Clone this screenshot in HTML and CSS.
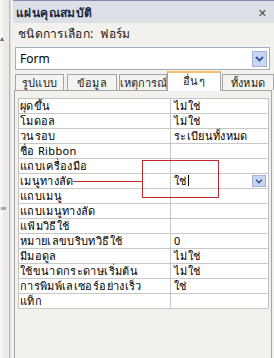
FILE: index.html
```html
<!DOCTYPE html>
<html lang="th">
<head>
  <meta charset="UTF-8" />
  <title>แผ่นคุณสมบัติ</title>
  <link rel="stylesheet" href="styles.css">
</head>
<body>
  <div class="strip">
    <span class="strip-up">&#9652;</span>
    <span class="strip-grip">&#8801;</span>
  </div>
  <div class="pane">
    <div class="titlebar">
      <span class="title">แผ่นคุณสมบัติ</span>
      <span class="close">&#10005;</span>
    </div>
    <div class="sel-label">ชนิดการเลือก:&nbsp; ฟอร์ม</div>
    <div class="combo">
      <span>Form</span>
      <span class="dd"><svg width="9" height="6" viewBox="0 0 9 6"><path d="M1 1 L4.5 4.5 L8 1" fill="none" stroke="#2f4f95" stroke-width="1.8"/></svg></span>
    </div>
    <div class="tabs">
      <div class="tab t1">รูปแบบ</div>
      <div class="tab t2">ข้อมูล</div>
      <div class="tab t3">เหตุการณ์</div>
      <div class="tab t4 active">อื่นๆ</div>
      <div class="tab t5">ทั้งหมด</div>
    </div>
    <div class="panel">
      <div class="grid">
        <div class="row"><div class="k">ผุดขึ้น</div><div class="v">ไม่ใช่</div></div>
        <div class="row"><div class="k">โมดอล</div><div class="v">ไม่ใช่</div></div>
        <div class="row"><div class="k">วนรอบ</div><div class="v">ระเบียนทั้งหมด</div></div>
        <div class="row"><div class="k">ชื่อ Ribbon</div><div class="v"></div></div>
        <div class="row"><div class="k">แถบเครื่องมือ</div><div class="v"></div></div>
        <div class="row"><div class="k">เมนูทางลัด</div><div class="v edit"><span>ใช่<i class="caret"></i></span><span class="dd small"><svg width="8" height="5" viewBox="0 0 9 6"><path d="M1 1 L4.5 4.5 L8 1" fill="none" stroke="#2f4f95" stroke-width="1.8"/></svg></span></div></div>
        <div class="row"><div class="k">แถบเมนู</div><div class="v"></div></div>
        <div class="row"><div class="k">แถบเมนูทางลัด</div><div class="v"></div></div>
        <div class="row"><div class="k">แฟ้มวิธีใช้</div><div class="v"></div></div>
        <div class="row"><div class="k">หมายเลขบริบทวิธีใช้</div><div class="v">0</div></div>
        <div class="row"><div class="k">มีมอดูล</div><div class="v">ไม่ใช่</div></div>
        <div class="row"><div class="k">ใช้ขนาดกระดาษเริ่มต้น</div><div class="v">ไม่ใช่</div></div>
        <div class="row"><div class="k">การพิมพ์เลเซอร์อย่างเร็ว</div><div class="v">ใช่</div></div>
        <div class="row"><div class="k">แท็ก</div><div class="v"></div></div>
      </div>
    </div>
  </div>
  <!-- annotation drawn over the screenshot -->
  <div class="mark-line"></div>
  <div class="mark-box"></div>
</body>
</html>
```

FILE: styles.css
```css
body {
  margin: 0;
  width: 274px;
  height: 358px;
  overflow: hidden;
  display: flex;
  background: #f2f1ed;
  font-family: Tahoma, "Noto Sans", "DejaVu Sans", sans-serif;
  font-size: 12px;
  color: #000;
  position: relative;
}
.strip {
  width: 6px;
  margin-right: 3px;
  background: #ecebe8;
  border-left: 3px solid #f6f6f4;
  border-right: 1px solid #b9b9b9;
  box-shadow: 1px 0 0 #dcdcdc;
  display: flex;
  flex-direction: column;
  font-size: 8px;
  color: #6a6a6a;
  line-height: 8px;
}
.strip-up {
  margin-top: 34px;
  margin-left: -3px;
}
.strip-grip {
  margin-top: 162px;
  margin-left: -3px;
}
.pane {
  flex: 1;
  display: flex;
  flex-direction: column;
}
.titlebar {
  height: 22px;
  border-top: 1px solid #8b84b4;
  background: #dcdfe5;
  display: flex;
  align-items: center;
  justify-content: space-between;
  padding: 0 7px 0 3px;
}
.title {
  font-weight: bold;
  color: #1d2740;
  letter-spacing: 0.4px;
}
.close {
  font-size: 11px;
  font-weight: bold;
  color: #4a4a4a;
}
.sel-label {
  margin: 4px 0 0 5px;
  height: 14px;
  line-height: 14px;
  color: #1c1c1c;
  letter-spacing: 0.3px;
}
.combo {
  margin: 6px 4px 0 2px;
  height: 21px;
  background: #fff;
  border: 1px solid #a7adb6;
  display: flex;
  align-items: center;
  justify-content: space-between;
  padding: 0 2px 0 4px;
}
.dd {
  width: 13px;
  height: 14px;
  background: #c7d6f1;
  border: 1px solid #9fb4da;
  display: flex;
  align-items: center;
  justify-content: center;
}
.dd.small {
  width: 12px;
  height: 10px;
}
.tabs {
  display: flex;
  align-items: flex-end;
  margin: 4px 0 0 2px;
  height: 16px;
  position: relative;
  z-index: 1;
}
.tab {
  height: 15px;
  border: 1px solid #a5a5a5;
  border-bottom: none;
  background: #f3f3f1;
  text-align: center;
  line-height: 15px;
  font-size: 11px;
  color: #1c1c1c;
  letter-spacing: 0.3px;
}
.t1 { width: 47px; margin-right: 3px; }
.t2 { width: 48px; margin-right: 2px; }
.t3 { width: 46px; margin-right: 0; overflow: hidden; white-space: nowrap; letter-spacing: 0; }
.t4 { width: 52px; }
.t5 { width: 50px; margin-left: 1px; }
.tab.active {
  height: 18px;
  background: #fff;
  border-top: 2px solid #f4c26a;
  line-height: 16px;
  margin-bottom: -1px;
}
.panel {
  flex: 1;
  margin: 0 2px 0 1px;
  border: 1px solid #a5a5a5;
  border-bottom: none;
  padding: 7px 2px 0 3px;
}
.grid {
  border: 1px solid #c2c2c2;
  border-bottom: none;
  background: #fff;
}
.row {
  display: flex;
  height: 14px;
  border-bottom: 1px solid #c8c8c8;
  line-height: 14px;
  font-size: 11px;
  letter-spacing: 0.35px;
}
.k {
  width: 150px;
  padding-left: 1px;
  border-right: 1px solid #c8c8c8;
  white-space: nowrap;
}
.v {
  flex: 1;
  padding-left: 3px;
}
.edit {
  display: flex;
  align-items: center;
  justify-content: space-between;
  padding-right: 2px;
}
.caret {
  display: inline-block;
  width: 1px;
  height: 11px;
  background: #000;
  margin-left: 1px;
  vertical-align: -1px;
}
.mark-line {
  position: absolute;
  left: 73px;
  top: 181px;
  width: 69px;
  height: 1px;
  background: #c2272d;
}
.mark-box {
  position: absolute;
  left: 142px;
  top: 160px;
  width: 75px;
  height: 36px;
  border: 1px solid #c2272d;
}
```
